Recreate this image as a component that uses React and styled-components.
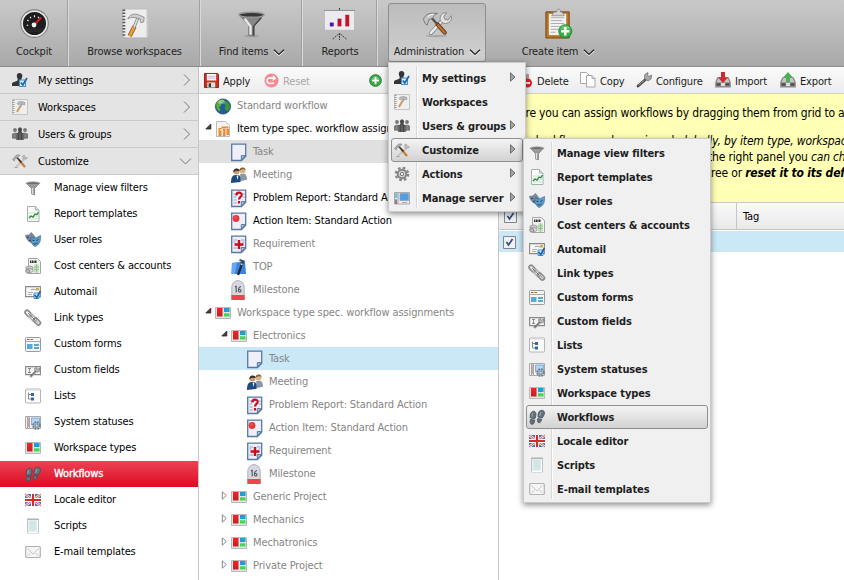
import React from 'react';
import styled, { createGlobalStyle, css } from 'styled-components';

const Global = createGlobalStyle`
  * { box-sizing: border-box; }
  body { margin: 0; overflow: hidden; background: #fff; }
  svg { display: block; flex: none; }
`;

/* ---------- icons ---------- */

const Sheet = ({ children }) => (
  <>
    <path d="M.7.2h14v12l-4.200 4.300H.7z" fill="#efeffa" stroke="#5878a4" strokeWidth="1.3" />
    <path d="M10.300 16v-4.400h4.300z" fill="#a9bdd6" stroke="#5878a4" strokeWidth="1" />
    {children}
  </>
);

const Tray = () => (
  <>
    <path d="M2.500 5h11l2.300 5v5.500H.2V10z" fill="#8b8b8b" />
    <path d="M3.500 6h9l2 4.200h-13z" fill="#c5c5c5" />
    <path d="M1.500 11.500h4v2h-4zM10.500 11.500h4v2h-4z" fill="#444" />
    <path d="M6 11h4v3H6z" fill="#ddd" />
  </>
);

const icons = {
  user: (
    <>
      <path d="M7.500 1C9.500 1 10.600 2.300 10.300 4.200 10.200 5.500 9.300 6.500 9.200 7.800L10.500 9v5H0V11.500C1 9.500 5 9.700 5.800 8 5.800 6.500 4.800 5.500 4.800 4 4.800 2.200 5.800 1 7.500 1z" fill="#333538" />
      <path d="M7.500 8h6v6.500h-6z" fill="#d9ecf9" stroke="#4b8fc7" strokeWidth="1.100" />
      <path d="M8.800 10.500l2 2.500 4.200-7" fill="none" stroke="#1b68b5" strokeWidth="1.700" />
    </>
  ),
  notebook: (
    <>
      <path d="M.5.5h15v15H.5z" fill="#efefef" stroke="#c4c4c4" />
      <path d="M1.500 1v14" stroke="#999" strokeWidth="2" strokeDasharray="1 1" />
      <path d="M8.500 7L5 13" stroke="#d29a55" strokeWidth="1.900" />
      <path d="M10 4.500L8.500 8" stroke="#999" strokeWidth="1.400" />
      <path d="M5 4.500C7 2 10 2.200 13 3.700L12.500 6 9.500 4.800 6.500 5.800z" fill="#bdbdbd" stroke="#8b8b8b" strokeWidth=".6" />
    </>
  ),
  group: (
    <>
      <g fill="#777"><circle cx="3" cy="4" r="1.900" /><circle cx="13" cy="4" r="1.900" /><path d="M0 12.500V8.500C0 6.500 5.500 6 5.500 8v5zM16 12.500V8.500C16 6.500 10.500 6 10.500 8v5z" /></g>
      <g fill="#484848"><ellipse cx="8" cy="3.700" rx="2.100" ry="2.500" /><path d="M4.300 14V9C4.300 7 6 7 6.500 6h3c.5 1 2.200 1 2.200 3v5z" /></g>
      <path d="M2.500 7v6M5 8v6M8 7v7M11 8v6M13.500 7v6" stroke="#999" strokeWidth=".6" />
    </>
  ),
  tools: (
    <>
      <path d="M12.500 6L4 14" stroke="#c6c6c6" strokeWidth="2" />
      <path d="M10 3C11.500 1 14 1.500 13 3.700l1.500.5C16 2.800 16.300 5.500 14.500 6.500L11 7z" fill="#b5b5b5" />
      <path d="M7 7l6 7" stroke="#cc7a35" strokeWidth="2.200" />
      <path d="M4 3.500l5.500 6" stroke="#333" strokeWidth="1.500" />
      <path d="M.5 6.500L4.500 2h3.500L6 4.300 3.200 5.300 2.200 8z" fill="#b5b5b5" stroke="#777" strokeWidth=".6" />
      <path d="M2.500 14.500h3" stroke="#888" strokeWidth=".7" />
    </>
  ),
  funnel: (
    <>
      <path d="M1.500 3.500l5 5v5.500l3 .8V8.500l5-5z" fill="#999" stroke="#777" strokeWidth=".7" />
      <path d="M7.500 8v6" stroke="#e2e2e2" strokeWidth="1.300" />
      <ellipse cx="8" cy="3.300" rx="6.900" ry="1.500" fill="#6d6d6d" stroke="#aaa" strokeWidth=".8" />
    </>
  ),
  report: (
    <>
      <path d="M2.500.500h8l3.500 3.500v11.500H2.500z" fill="#fafcfa" stroke="#a4b0b4" />
      <path d="M10.500.5V4H14" fill="#ddd" stroke="#a4b0b4" />
      <path d="M3.500 7h10M3.500 10h10M3.500 13h10" stroke="#bfe5bf" />
      <path d="M4 12l2-2 2 1.200 2-3 2 .3 1.500-2.500" fill="none" stroke="#25843a" strokeWidth="1.200" />
    </>
  ),
  masks: (
    <>
      <path d="M0 3l4-.5L6.500 0l4 5-2 6C5 12 1 8 0 3z" fill="#77879c" />
      <path d="M2 5.500l2-.3M4 8.500L6 8" stroke="#2b3c50" />
      <path d="M6 5l4 1.200L15.500 3.500C16 9 14.500 13 10 14.500 6.500 12.500 5.500 9 6 5z" fill="#5e9cc9" stroke="#326589" strokeWidth=".6" />
      <path d="M7.500 8.200l2 .5M11.500 8.500l2-1M8.500 11.500c1.500 1 3 .5 4-1" stroke="#17415f" fill="none" />
    </>
  ),
  cost: (
    <>
      <path d="M3.500.500h9l3 3v12h-12z" fill="#f4f4f4" stroke="#a5a5a5" />
      <path d="M5 2.500h6.500v2.500H5z" fill="#333" /><path d="M6.500 2.500v2M9 2v3" stroke="#fff" strokeWidth=".7" />
      <path d="M9 6.500h5v8H9z" fill="#c3e3bd" />
      <path d="M9 9h5M9 11.500h5M11.500 6v9" stroke="#77b877" strokeWidth=".6" />
      <ellipse cx="4.500" cy="10" rx="3.800" ry="2" fill="#ccc" stroke="#888" strokeWidth=".7" />
      <ellipse cx="4.500" cy="12.500" rx="3.800" ry="2" fill="#ddd" stroke="#888" strokeWidth=".7" />
      <circle cx="2.800" cy="13.200" r="2" fill="#bbb" stroke="#777" strokeWidth=".7" />
    </>
  ),
  automail: (
    <>
      <path d="M.6 2.600h14.800v10H.6z" fill="#f7f7f7" stroke="#888" strokeWidth="1.100" />
      <path d="M11 4h3v2.500h-3z" fill="#d4ad45" /><path d="M3 8.500h5M3 10.500h4" stroke="#999" strokeWidth=".8" /><path d="M6 6c1-1 3-1 5 0" stroke="#999" fill="none" />
      <path d="M9 9h5v5.500H9z" fill="#cbe4f5" stroke="#4b8fc7" />
      <path d="M9.500 11l2.300 2.500L15.500 7" fill="none" stroke="#1965b0" strokeWidth="1.700" />
    </>
  ),
  link: (
    <g fill="none" stroke="#8c8c8c" strokeWidth="1.700">
      <rect x="-.5" y="2.200" width="8" height="4" rx="2" transform="rotate(45 4 4)" />
      <rect x="4" y="6" width="8" height="4" rx="2" transform="rotate(45 8 8)" stroke="#b8b8b8" />
      <rect x="8" y="9.500" width="8" height="4" rx="2" transform="rotate(45 12 11.500)" />
      <path d="M3 3l3 3M7 7l3 3M11 10.500l3 3" stroke="#666" strokeWidth=".8" />
    </g>
  ),
  forms: (
    <>
      <rect x=".5" y="1.500" width="15" height="14" rx="1" fill="#f6f6f6" stroke="#9b9b9b" />
      <path d="M2 3.500h2" stroke="#e33" /><path d="M4 3.500h2" stroke="#d9b520" /><path d="M6 3.500h2" stroke="#35a835" />
      <path d="M1 5.500h14" stroke="#aaa" />
      <path d="M2 8h5.500v5H2zM9 8h5v2H9zM9 11h5v2H9z" fill="#59a9d8" />
    </>
  ),
  fields: (
    <>
      <path d="M.6 4.600h14.800v8H.6z" fill="#f4f4f4" stroke="#888" strokeWidth="1.100" />
      <path d="M3 6.500h3M3 10.500h3M4.500 6.500v4" stroke="#777" strokeWidth=".8" />
      <path d="M5.500 15L12 8.500" stroke="#999" strokeWidth="2" /><path d="M5 14.500l6-6" stroke="#444" strokeWidth=".8" />
      <path d="M10 9L9.500 6.500l2-1L12 7.500l2.500-1.500.3 3L12.500 10z" fill="#bbb" stroke="#777" strokeWidth=".7" />
    </>
  ),
  lists: (
    <>
      <rect x=".5" y="1" width="15" height="14" rx="1" fill="#fdfdfd" stroke="#b5b5b5" />
      <path d="M1 2h14" stroke="#ddd" strokeWidth="1.500" />
      <path d="M3.500 4.500v6.500H6M3.500 6.500H6" fill="none" stroke="#888" />
      <path d="M6 5h3v3H6zM6 9.500h3v3H6z" fill="#2f67b0" />
    </>
  ),
  statuses: (
    <>
      <path d="M.5 2.500h15v12H.5z" fill="#f1f1f1" stroke="#aaa" />
      <path d="M2.500 3v11M4.500 3v11" stroke="#aaa" /><path d="M3.400 3.500V13" stroke="#c33" strokeWidth=".5" />
      <path d="M6.500 4h8v7h-8z" fill="#b4d6f2" stroke="#6fa3d0" strokeWidth=".8" />
      <circle cx="11.500" cy="11.500" r="3.400" fill="#aabccb" stroke="#6b7b8b" strokeWidth="1.800" strokeDasharray="1.700 1" />
      <circle cx="11.500" cy="11.500" r="1.300" fill="#eef" stroke="#57697b" strokeWidth=".7" />
    </>
  ),
  types: (
    <>
      <path d="M.5 2.500h15v11H.5z" fill="#e4e4e4" stroke="#b8b8b8" />
      <path d="M2 3h5.500v8.500H2z" fill="url(#red)" />
      <path d="M9 3h5.500v4H9z" fill="#18a0d8" /><path d="M9 8.300h5.500v3.200H9z" fill="#3bdc55" />
    </>
  ),
  feet: (
    <g fill="#64727d" stroke="#414c55" strokeWidth=".8">
      <path d="M3.500 2.500C6 1.500 7.500 3.500 6.800 6.500L6 9.500 1.300 9C.8 6.500 1.500 3.500 3.500 2.500z" />
      <path d="M1.500 10.500l4.200.5C5.500 14 4.500 15.500 3 15.300 1 15 .8 13 1.500 10.500z" />
      <path d="M11.500 1.500C14.500.7 16 2.500 15.300 5.200 15 6.700 14 7.700 13.200 9L9 8C8.800 5 9.500 2.200 11.500 1.500z" />
      <path d="M8.800 9.500l3.800.8C12 13 11 14 9.800 13.700 8.300 13.400 8.300 11.500 8.800 9.500z" />
      <path d="M3.500 4l-.8 4M12 3l-1.500 4" stroke="#a7b5c0" />
    </g>
  ),
  flag: (
    <>
      <path d="M0 2h16v12H0z" fill="#4a73b5" />
      <path d="M0 2l16 12M16 2L0 14" stroke="#f2dede" strokeWidth="2.600" />
      <path d="M0 2l16 12M16 2L0 14" stroke="#df6666" strokeWidth="1" />
      <path d="M8 2v12M0 8h16" stroke="#fff" strokeWidth="4" />
      <path d="M8 2v12M0 8h16" stroke="#d92a2a" strokeWidth="2.200" />
    </>
  ),
  script: (
    <>
      <path d="M2.500 1h11v14h-11z" fill="#e3eeee" stroke="#bcc8ca" />
      <path d="M4.500 3h7v9.500h-7z" fill="#d3e6e6" /><path d="M2 1.300h12" stroke="#aaa" /><path d="M12.500 2v12.500H3" stroke="#fff" fill="none" />
    </>
  ),
  mail: (
    <>
      <rect x=".7" y="2.500" width="14.600" height="11" rx="1" fill="#f5f5f5" stroke="#b2b2b2" strokeWidth="1.200" />
      <path d="M2.500 4.500L8 10l5.500-5.500M2.500 12l3-3M13.500 12l-3-3" fill="none" stroke="#c5c5c5" />
    </>
  ),
  globe: (
    <>
      <circle cx="8" cy="8.500" r="7.600" fill="#235a9c" stroke="#173f72" strokeWidth=".7" />
      <path d="M2 4C4 1.500 8 1 9.500 2L8 4.500 6 5 6.500 7.500 4 9 5.500 11.500l-1 2C1 11 .5 7.500 2 4z" fill="#59ae3c" />
      <path d="M10.500 2.500C14 4 15.500 7.500 14.700 10.500L12 13.500 9.500 10.500l1-3-1.500-2z" fill="#3f9737" />
      <ellipse cx="6.500" cy="4" rx="3.500" ry="2" fill="#fff" opacity=".35" />
    </>
  ),
  itemTypes: (
    <>
      <path d="M1.500.500h9l4 4v11h-13z" fill="#f5f3f0" stroke="#bbb" />
      <path d="M3.500 7h3v8h-3zM6.500 5.500h7v2h-7zM8 8h2.500v7H8zM11.500 8H14v6h-2.500z" fill="#ee8932" />
      <path d="M5 8h2v2H5zM7 10h1.500v2H7z" fill="#fbd1a5" />
    </>
  ),
  task: <Sheet />,
  meeting: (
    <>
      <circle cx="11.500" cy="3.500" r="3" fill="#d7b083" /><path d="M8.500 3.500C8.500 0 14.500-.5 14.500 3l-2-1z" fill="#8a6034" />
      <path d="M9 7l4.500-.3c2 1 2.500 3 2.500 6L10 14z" fill="#8b99a6" />
      <circle cx="5.500" cy="4.500" r="2.900" fill="#c99b6c" /><path d="M2.200 5.500C2 .5 8.500.5 8.700 4l-4-.2z" fill="#3c2e25" />
      <path d="M0 16C0 11 1 8.500 4 8h3.500C10 9 10 12 9.500 15z" fill="#1f4b80" /><path d="M5.500 8.500l1 4.500 1-4.500z" fill="#f5f5f5" />
    </>
  ),
  problem: (
    <Sheet>
      <path d="M2.500 4h2.500M2.500 7h2.500M2.500 10h3M2.500 13h3M11.500 4H14M11.500 7H14" stroke="#8da2c4" />
      <path d="M5.300 5.500c0-4 5.700-3.500 5.400-.5C10.500 7 8 6.800 8 9.500M8 11v2.500" fill="none" stroke="#c90d1c" strokeWidth="2.200" />
    </Sheet>
  ),
  action: (
    <Sheet>
      <circle cx="5" cy="5.500" r="3.400" fill="#e93535" /><circle cx="4.500" cy="4.500" r="1.500" fill="#f04f4f" />
    </Sheet>
  ),
  requirement: (
    <Sheet>
      <path d="M2.500 4H6M2.500 12h3.500M2.500 6h2M10 4h3.500M11.500 6h2" stroke="#8da2c4" />
      <path d="M8 4v9M3.500 8.500h9" stroke="#c90d1c" strokeWidth="2.400" />
    </Sheet>
  ),
  top: (
    <>
      <path d="M1 4l13-1.500L15 15 .5 15z" fill="#3b83dc" />
      <path d="M1 4l5-.7L4 15H.5z" fill="#68a7ed" />
      <path d="M12 2L7 16" stroke="#222c3a" strokeWidth="2.300" /><path d="M8.500 1l5 1.700" stroke="#444f5c" strokeWidth="2" /><path d="M10 5l1.500.5" stroke="#dfe8ef" strokeWidth="1.500" />
    </>
  ),
  milestone: (
    <>
      <path d="M.8 17V5C1.500-3.500 12.500-3.500 13.200 5v12z" fill="#d8d8e2" stroke="#b0b0bc" />
      <path d="M.4 13h13.200v5H.4z" fill="#e8484c" />
      <path d="M4 5l1.200-.8v6.300M10 4.500C7 5 6.800 10 8.500 10 10.700 10 10.300 7 8 7.500" fill="none" stroke="#555" strokeWidth="1.100" />
    </>
  ),
  save: (
    <>
      <path d="M.5.5h14l1 1v14H.5z" fill="#c92e1e" stroke="#8b1f15" />
      <path d="M3 1h10v7H3z" fill="#f3f6fa" /><path d="M4 3.500h8M4 5.500h8" stroke="#9fb3cf" strokeWidth=".8" />
      <path d="M3.500 10h8.500v5.500H3.500z" fill="#ddd" /><path d="M5 11h2.500v4H5z" fill="#333" />
    </>
  ),
  reset: (
    <>
      <circle cx="8" cy="8" r="7.500" fill="#f08d94" />
      <path d="M10.500 11H7.500A3 3 0 1 1 7.500 5.500H10" fill="none" stroke="#fff" strokeWidth="1.700" /><path d="M9.300 2.500l4 3-4 3z" fill="#fff" />
    </>
  ),
  add: (
    <>
      <circle cx="8" cy="8" r="7.300" fill="#34a346" stroke="#248534" /><path d="M3 6a5.500 4.500 0 0 1 10 0z" fill="#7bd087" opacity=".6" />
      <path d="M8 3.500v9M3.500 8h9" stroke="#fff" strokeWidth="2.400" />
    </>
  ),
  gear: (
    <>
      <circle cx="8" cy="8" r="6.200" fill="none" stroke="#858585" strokeWidth="2.200" strokeDasharray="2.600 2.270" />
      <circle cx="8" cy="8" r="4.300" fill="#d5d5d5" stroke="#858585" strokeWidth="2" /><circle cx="8" cy="8" r="1.700" fill="#eee" stroke="#777" />
    </>
  ),
  server: (
    <>
      <path d="M.5 2.500h15v11.500H.5z" fill="#eee" stroke="#aaa" /><path d="M2 3v11" stroke="#19a9c8" strokeWidth="1.200" strokeDasharray="5 1" /><path d="M2 10v4" stroke="#cf2b2b" />
      <path d="M4 3v10.500" stroke="#999" /><path d="M6 3.500h8.500v7H6z" fill="#4f9ee6" stroke="#7da4c9" strokeWidth=".8" /><path d="M8 12.500h5" stroke="#aaa" />
    </>
  ),
  del: (
    <>
      <path d="M3 2h9v12H3z" fill="#aaa" /><circle cx="10.500" cy="11" r="4.500" fill="#d9262e" /><path d="M8 11h5" stroke="#fff" strokeWidth="1.800" />
    </>
  ),
  copy: (
    <g fill="#fff" stroke="#a8a8a8">
      <path d="M.5.5h6L9 3v8.500H.5z" /><path d="M6.500 3.500h5.500l3 3v8.500H6.500z" /><path d="M12 3.500v3h3" fill="#ddd" />
    </g>
  ),
  wrench: (
    <>
      <path d="M2 14L9.500 7.500" stroke="#4a4a4a" strokeWidth="2.800" strokeLinecap="round" />
      <path d="M2.500 13.200L8.500 8" stroke="#aaa" strokeWidth=".9" />
      <path d="M8.500 6.500L8.800 2.500 12 .5l-.3 3L13 4.500l2.700-1.500-.7 4L12 9z" fill="#aaa" stroke="#666" strokeWidth=".7" />
    </>
  ),
  importing: (<><Tray /><path d="M6 0h4v5.500h3L8 11 3 5.500h3z" fill="#d9232e" /></>),
  exporting: (<><Tray /><path d="M6 10h4V5.500h3L8 0 3 5.500h3z" fill="#4fae58" /></>),
};

const Icon = ({ name, size = 16 }) => (
  <svg width={size} height={size} viewBox="0 0 16 16" overflow="visible">
    <defs><linearGradient id="red" x1="0" x2="0" y1="0" y2="1"><stop stopColor="#ff2020" /><stop offset="1" stopColor="#c02028" /></linearGradient></defs>
    {icons[name]}
  </svg>
);

const bigIcons = {
  gauge: (
    <>
      <circle cx="16" cy="16" r="14" fill="#1d1d1d" stroke="#777" strokeWidth="1.400" />
      <circle cx="16" cy="16" r="12.800" fill="none" stroke="#e8e8e8" strokeWidth="1.800" />
      <path d="M8 18l1.500-.5M8.500 12.500l1.500.7M11.500 9l.8 1.500M16 7.500v2M20.500 9l-.8 1.500" stroke="#eee" strokeWidth="1.200" />
      <path d="M16 17l7-7" stroke="#e5182b" strokeWidth="2" /><circle cx="15.500" cy="17.500" r="2.500" fill="#eee" />
      <path d="M6 22h20M8 24h16" stroke="#333" strokeWidth=".8" />
    </>
  ),
  book: (
    <>
      <path d="M4 1h26v30H4z" fill="#ededed" stroke="#c0c0c0" /><path d="M29 2v28M5 31h26" stroke="#aaa" strokeWidth=".7" />
      <path d="M5 1.500v29" stroke="#555" strokeWidth="3" strokeDasharray="1.500 1.700" />
      <path d="M16 19l-5 10" stroke="#8e5b1e" strokeWidth="4.500" /><path d="M16 19l-5 10" stroke="#e69b3c" strokeWidth="3" />
      <path d="M20 9l-4.500 11" stroke="#777" strokeWidth="3" /><path d="M20 9l-4.500 11" stroke="#ddd" strokeWidth="1.700" />
      <path d="M9 11C12 6 16 5.500 20 7l6 2.500-.5 5-3 .5-1-4-5-1c-3-.7-4.500 0-7.500 1z" fill="#cfcfcf" stroke="#777" strokeWidth=".7" />
    </>
  ),
  bigFunnel: (
    <>
      <ellipse cx="16" cy="29" rx="8" ry="1.200" fill="#888" opacity=".5" />
      <path d="M3 7l10 11v10l6 1V18L29 7z" fill="#888" stroke="#666" strokeWidth=".6" />
      <path d="M9 11l6 8v8.500" stroke="#e8e8e8" strokeWidth="2.500" fill="none" /><path d="M26 10l-8 9v9" stroke="#444" strokeWidth="1.500" fill="none" />
      <ellipse cx="16" cy="7" rx="13" ry="2.600" fill="#373737" stroke="#999" strokeWidth="1.400" />
    </>
  ),
  chart: (
    <>
      <path d="M16 0v2M15 27l-6 5M17 27l6 5M16 26v7" stroke="#333" strokeDasharray="2 1" />
      <path d="M1 2h30v21H1z" fill="#ececf0" /><path d="M0 2.500h32" stroke="#888" /><path d="M1 23h30" stroke="#aaa" strokeWidth=".7" />
      <path d="M6 15h4v4H6z" fill="#4a13b8" /><path d="M14 11h4v8h-4z" fill="#ba1437" /><path d="M22 7h4v12h-4z" fill="#c91329" />
    </>
  ),
  bigTools: (
    <>
      <ellipse cx="15" cy="29" rx="11" ry="1.100" fill="#888" opacity=".5" />
      <path d="M9 26L22 12" stroke="#777" strokeWidth="3.900" strokeLinecap="round" /><path d="M9 26L22 12" stroke="#ededed" strokeWidth="2.500" strokeLinecap="round" />
      <path d="M19 13.500C17.500 8 21 4.500 25.500 5l-3 3.500 1 3 3.500 1L30 8c1.500 5-2 8.500-7.500 8z" fill="#e2e2e2" stroke="#777" strokeWidth=".8" />
      <path d="M16 17l7.500 8.500" stroke="#6e3913" strokeWidth="4.200" strokeLinecap="round" /><path d="M16.500 17.500l7 8" stroke="#b87232" strokeWidth="2.200" strokeLinecap="round" />
      <path d="M9 9l6.500 7.500" stroke="#555" strokeWidth="2.600" />
      <path d="M1.500 12C2 9 5 6 9 5.500h7c-3 1-4 3-5 5l-4 1.500-1.500 5.500-2-1z" fill="#c4c4c4" stroke="#666" strokeWidth=".8" />
      <path d="M6 9c2-2 4-2.500 6-2.500" stroke="#fff" fill="none" />
    </>
  ),
  clipboard: (
    <>
      <path d="M3 4h24v27H3z" fill="#b97325" stroke="#78450f" /><path d="M6 6h18v22H6z" fill="#f2f2f2" />
      <path d="M8 10h14M8 13h12M8 16h14M8 19h10M8 22h8M8 25h5" stroke="#aaa" />
      <path d="M9 8l2-4h3c0-4 4-4 4 0h2l2 4z" fill="#d3d3d3" stroke="#777" strokeWidth=".7" />
      <circle cx="23" cy="24" r="6.800" fill="#34ae43" stroke="#1d8030" strokeWidth=".8" /><path d="M18 22a5 4 0 0 1 10 0z" fill="#88d990" opacity=".6" />
      <path d="M23 19.700v8.600M18.700 24h8.600" stroke="#fff" strokeWidth="2.600" />
    </>
  ),
};

const BigIcon = ({ name }) => <svg width="31" height="31" viewBox="0 0 32 32" overflow="visible">{bigIcons[name]}</svg>;

const Down = () => (
  <svg width="12" height="7" viewBox="0 0 12 7"><path d="M1 2l5 4.200L11 2" fill="none" stroke="#f4f4f4" strokeWidth="1.500" /><path d="M1 .8l5 4.600L11 .8" fill="none" stroke="#222" strokeWidth="1.300" /></svg>
);

const Chevron = ({ open }) => (
  <svg width="13" height="13" viewBox="0 0 13 13">
    <path d={open ? 'M1 3.500l5.500 5.500L12 3.500' : 'M5 .5l5.500 5.500L5 11.500'} fill="none" stroke="#777" />
  </svg>
);

const Twist = ({ open }) => (
  <svg width="7" height="9" viewBox="0 0 7 9">
    {open ? <path d="M.8 6L5.800 1v5z" fill="#444" stroke="#222" strokeWidth=".8" /> : <path d="M1.300.8l4 3.700-4 3.700z" fill="#fff" stroke="#888" />}
  </svg>
);

/* ---------- layout ---------- */

const App = styled.div`
  position: relative;
  display: flex;
  flex-direction: column;
  width: 844px;
  height: 580px;
  overflow: hidden;
  color: #000;
  font-family: "DejaVu Sans Condensed", "DejaVu Sans", Tahoma, sans-serif;
  font-stretch: condensed;
  font-size: 11px;
  letter-spacing: -0.15px;
  line-height: 14px;
  white-space: nowrap;
`;

const Ribbon = styled.header`
  display: flex;
  flex: none;
  height: 67px;
  background: linear-gradient(#c9c9c9, #b9b9b9 50%, #a9a9a9);
  border-bottom: 1px solid #8c8c8c;
`;

const RibbonCell = styled.div`
  display: flex;
  flex: none;
  justify-content: center;
  width: ${(p) => p.$w}px;
  padding-top: 3px;
  ${(p) => p.$divider && css`
    border-right: 1px solid #dadada;
    box-shadow: inset -1px 0 #a1a1a1;
  `}
`;

const RibbonButton = styled.button`
  display: flex;
  flex-direction: column;
  align-items: center;
  width: ${(p) => (p.$active ? '98px' : 'auto')};
  height: 59px;
  padding: 4px 0 0;
  color: #222;
  font: inherit;
  letter-spacing: inherit;
  background: ${(p) => (p.$active ? 'linear-gradient(#bcbcbc, #d0d0d0)' : 'none')};
  border: 1px solid ${(p) => (p.$active ? '#8e8e8e' : 'transparent')};
  border-radius: 3px;
`;

const RibbonLabel = styled.span`
  display: flex;
  align-items: center;
  gap: 5px;
  margin-top: 6px;
  padding-left: ${(p) => (p.$menu ? 1 : 0)}px;
`;

const Body = styled.div`
  display: flex;
  flex: 1;
  min-height: 0;
`;

const Sidebar = styled.nav`
  flex: none;
  width: 199px;
  border-right: 1px solid #c6c6c6;
`;

const Section = styled.div`
  display: flex;
  align-items: center;
  height: 27px;
  padding: 0 6px 0 12px;
  background: #e4e4e4;
  border-bottom: 1px solid #c9c9c9;
`;

const SectionLabel = styled.span`
  flex: 1;
  padding: 2px 0 0 10px;
`;

const SideItem = styled.div`
  display: flex;
  align-items: center;
  gap: 13px;
  height: 26px;
  padding: 0 0 1px 25px;
  ${(p) => p.$active && css`
    color: #fff;
    background: linear-gradient(#ec4355, #dd0b21);
    -webkit-text-stroke: 0.35px #fff;
  `}
`;

const TreePanel = styled.section`
  flex: none;
  width: 300px;
  border-right: 1px solid #c6c6c6;
`;

const Toolbar = styled.div`
  display: flex;
  align-items: center;
  height: 27px;
  padding-left: ${(p) => p.$pad}px;
  background: linear-gradient(#fbfbfb, #ececec);
  border-bottom: 1px solid #cfcfcf;
`;

const ToolButton = styled.div`
  display: flex;
  flex: none;
  align-items: center;
  gap: 4px;
  width: ${(p) => p.$w}px;
  color: ${(p) => (p.$disabled ? '#a9a9a9' : '#1b1b1b')};
`;

const ToolLabel = styled.span`
  padding-top: 3px;
`;

const TreeRow = styled.div`
  display: flex;
  align-items: center;
  height: 23px;
  padding-left: ${(p) => 6 + p.$level * 16}px;
  letter-spacing: -0.12px;
  color: ${(p) => (p.$strong ? '#000' : '#858585')};
  background: ${(p) => p.$bg || 'none'};
`;

const TwistSlot = styled.span`
  width: 10px;
  height: 12px;
`;

const TreeLabel = styled.span`
  padding-left: 6px;
`;

const Content = styled.main`
  flex: 1;
  min-width: 0;
  overflow: hidden;
`;

const Note = styled.div`
  height: 109px;
  padding-top: 11px;
  overflow: hidden;
  font-size: 12px;
  letter-spacing: -0.18px;
  line-height: 16px;
  background: #ffffb5;
  border-bottom: 1px solid #c9c9c9;
`;

const NoteLine = styled.div`
  display: flex;
  width: ${(p) => p.$right || 345}px;
  padding-left: ${(p) => p.$left || 0}px;
  justify-content: ${(p) => (p.$right ? 'flex-end' : 'flex-start')};
  margin-top: ${(p) => p.$top || 0}px;
  white-space: pre;
`;

const NoteRun = styled.span`
  display: block;
`;

const Em = styled.em`
  font-weight: ${(p) => (p.$bold ? 700 : 400)};
`;

const GridRow = styled.div`
  display: grid;
  grid-template-columns: 238px 1fr;
  align-items: center;
  height: ${(p) => (p.$head ? 27 : 21)}px;
  margin-top: ${(p) => (p.$head ? 0 : 1)}px;
  background: ${(p) => (p.$head ? 'linear-gradient(#fafafa, #e9e9e9)' : '#cbe8f6')};
  border-bottom: ${(p) => (p.$head ? '1px solid #c5c5c5' : 'none')};
`;

const GridCell = styled.div`
  display: flex;
  align-items: center;
  align-self: stretch;
  padding: 1px 0 0 ${(p) => p.$pad}px;
  border-right: ${(p) => (p.$line ? '1px solid #c5c5c5' : 'none')};
`;

const Menu = styled.div`
  position: absolute;
  z-index: 2;
  top: ${(p) => p.$y}px;
  left: ${(p) => p.$x}px;
  width: ${(p) => p.$w}px;
  height: ${(p) => p.$h}px;
  padding: ${(p) => p.$top}px 2px 0;
  background: linear-gradient(90deg, transparent 27px, #d8d8d8 27px, #d8d8d8 28px, #fff 28px, #fff 29px, transparent 29px) 0 3px / 100% calc(100% - 6px) no-repeat, #f0f0f0;
  border: 1px solid #cacaca;
  box-shadow: 0 2px 6px rgba(0, 0, 0, 0.45);
  font-weight: 700;
  letter-spacing: -0.12px;
  color: #1e1e1e;
`;

const MenuItem = styled.div`
  display: flex;
  align-items: center;
  height: 24px;
  padding: 0 6px 0 2px;
  border: 1px solid ${(p) => (p.$active ? '#8f8f8f' : 'transparent')};
  border-radius: 3px;
  background: ${(p) => (p.$active ? 'linear-gradient(#f4f4f4, #d2d2d2)' : 'none')};
`;

const MenuLabel = styled.span`
  flex: 1;
  padding: 2px 0 0 12px;
`;

const Check = () => (
  <svg width="13" height="13" viewBox="0 0 13 13"><path d="M.5.5h12v12H.5z" fill="#f1f1f1" stroke="#7b8792" /><path d="M3.500 6l2 3L9.500 3" fill="none" stroke="#344c85" strokeWidth="1.700" /></svg>
);

const MenuArrow = () => (
  <svg width="6" height="12" viewBox="0 0 6 12"><path d="M.5.800L5 5 .5 9.200z" fill="#a5a5a5" stroke="#555" strokeWidth=".8" /></svg>
);

/* ---------- data ---------- */

const ribbon = [
  { w: 69, label: 'Cockpit', icon: 'gauge', divider: true },
  { w: 132, label: 'Browse workspaces', icon: 'book', divider: true },
  { w: 102, label: 'Find items', icon: 'bigFunnel', divider: true, menu: true },
  { w: 75, label: 'Reports', icon: 'chart', divider: true },
  { w: 118, label: 'Administration', icon: 'bigTools', menu: true, active: true },
  { w: 124, label: 'Create item', icon: 'clipboard', menu: true },
];

const sections = [['My settings', 'user'], ['Workspaces', 'notebook'], ['Users & groups', 'group'], ['Customize', 'tools']];

const customize = [
  ['Manage view filters', 'funnel'], ['Report templates', 'report'], ['User roles', 'masks'],
  ['Cost centers & accounts', 'cost'], ['Automail', 'automail'], ['Link types', 'link'],
  ['Custom forms', 'forms'], ['Custom fields', 'fields'], ['Lists', 'lists'],
  ['System statuses', 'statuses'], ['Workspace types', 'types'], ['Workflows', 'feet'],
  ['Locale editor', 'flag'], ['Scripts', 'script'], ['E-mail templates', 'mail'],
];

const tree = [
  { l: 0, t: 'Standard workflow', i: 'globe' },
  { l: 0, t: 'Item type spec. workflow assignments', i: 'itemTypes', open: true, strong: true },
  { l: 1, t: 'Task', i: 'task', bg: '#e0e0e0' },
  { l: 1, t: 'Meeting', i: 'meeting' },
  { l: 1, t: 'Problem Report: Standard Action', i: 'problem', strong: true },
  { l: 1, t: 'Action Item: Standard Action', i: 'action', strong: true },
  { l: 1, t: 'Requirement', i: 'requirement' },
  { l: 1, t: 'TOP', i: 'top' },
  { l: 1, t: 'Milestone', i: 'milestone' },
  { l: 0, t: 'Workspace type spec. workflow assignments', i: 'types', open: true },
  { l: 1, t: 'Electronics', i: 'types', open: true },
  { l: 2, t: 'Task', i: 'task', bg: '#cbe8f6' },
  { l: 2, t: 'Meeting', i: 'meeting' },
  { l: 2, t: 'Problem Report: Standard Action', i: 'problem' },
  { l: 2, t: 'Action Item: Standard Action', i: 'action' },
  { l: 2, t: 'Requirement', i: 'requirement' },
  { l: 2, t: 'Milestone', i: 'milestone' },
  { l: 1, t: 'Generic Project', i: 'types', open: false },
  { l: 1, t: 'Mechanics', i: 'types', open: false },
  { l: 1, t: 'Mechatronics', i: 'types', open: false },
  { l: 1, t: 'Private Project', i: 'types', open: false },
];

const adminMenu = [
  ['My settings', 'user', true], ['Workspaces', 'notebook', false], ['Users & groups', 'group', true],
  ['Customize', 'tools', true], ['Actions', 'gear', true], ['Manage server', 'server', true],
];

const actions = [[63, 'Delete', 'del'], [56, 'Copy', 'copy'], [79, 'Configure', 'wrench'], [65, 'Import', 'importing'], [64, 'Export', 'exporting']];

export default function Page() {
  return (
    <App>
      <Global />
      <Ribbon>
        {ribbon.map((r) => (
          <RibbonCell key={r.label} $w={r.w} $divider={r.divider}>
            <RibbonButton $active={r.active}>
              <BigIcon name={r.icon} />
              <RibbonLabel $menu={r.menu}>{r.label}{r.menu && <Down />}</RibbonLabel>
            </RibbonButton>
          </RibbonCell>
        ))}
      </Ribbon>
      <Body>
        <Sidebar>
          {sections.map(([t, i]) => (
            <Section key={t}>
              <Icon name={i} />
              <SectionLabel>{t}</SectionLabel>
              <Chevron open={t === 'Customize'} />
            </Section>
          ))}
          {customize.map(([t, i]) => (
            <SideItem key={t} $active={t === 'Workflows'}><Icon name={i} />{t}</SideItem>
          ))}
        </Sidebar>
        <TreePanel>
          <Toolbar $pad={5}>
            <ToolButton $w={60}><Icon name="save" size={15} /><ToolLabel>Apply</ToolLabel></ToolButton>
            <ToolButton $w={105} $disabled><Icon name="reset" size={15} /><ToolLabel>Reset</ToolLabel></ToolButton>
            <ToolButton $w={20}><Icon name="add" size={13} /></ToolButton>
          </Toolbar>
          {tree.map((n, k) => (
            <TreeRow key={k} $level={n.l} $strong={n.strong} $bg={n.bg}>
              <TwistSlot>{n.open !== undefined && <Twist open={n.open} />}</TwistSlot>
              <Icon name={n.i} />
              <TreeLabel>{n.t}</TreeLabel>
            </TreeRow>
          ))}
        </TreePanel>
        <Content>
          <Toolbar $pad={18}>
            {actions.map(([w, t, i]) => <ToolButton key={t} $w={w}><Icon name={i} /><ToolLabel>{t}</ToolLabel></ToolButton>)}
          </Toolbar>
          <Note>
            <NoteLine $left={12}>Here you can assign workflows by dragging them from grid to any node</NoteLine>
            <NoteLine $right={354} $top={12}><NoteRun>Standard flows can be assigned <Em>globally, by item type, workspace</Em></NoteRun></NoteLine>
            <NoteLine $left={209}>the right panel you <Em>can change</Em></NoteLine>
            <NoteLine $left={208}>tree or <Em $bold>reset it to its default</Em></NoteLine>
          </Note>
          <GridRow $head>
            <GridCell $pad={5} $line><Check /></GridCell>
            <GridCell $pad={6}>Tag</GridCell>
          </GridRow>
          <GridRow><GridCell $pad={4}><Check /></GridCell></GridRow>
        </Content>
      </Body>
      <Menu $x={388} $y={62} $w={138} $h={150} $top={3}>
        {adminMenu.map(([t, i, sub]) => (
          <MenuItem key={t} $active={t === 'Customize'}>
            <Icon name={i} /><MenuLabel>{t}</MenuLabel>{sub && <MenuArrow />}
          </MenuItem>
        ))}
      </Menu>
      <Menu $x={523} $y={138} $w={188} $h={365} $top={2}>
        {customize.map(([t, i]) => (
          <MenuItem key={t} $active={t === 'Workflows'}><Icon name={i} /><MenuLabel>{t}</MenuLabel></MenuItem>
        ))}
      </Menu>
    </App>
  );
}
